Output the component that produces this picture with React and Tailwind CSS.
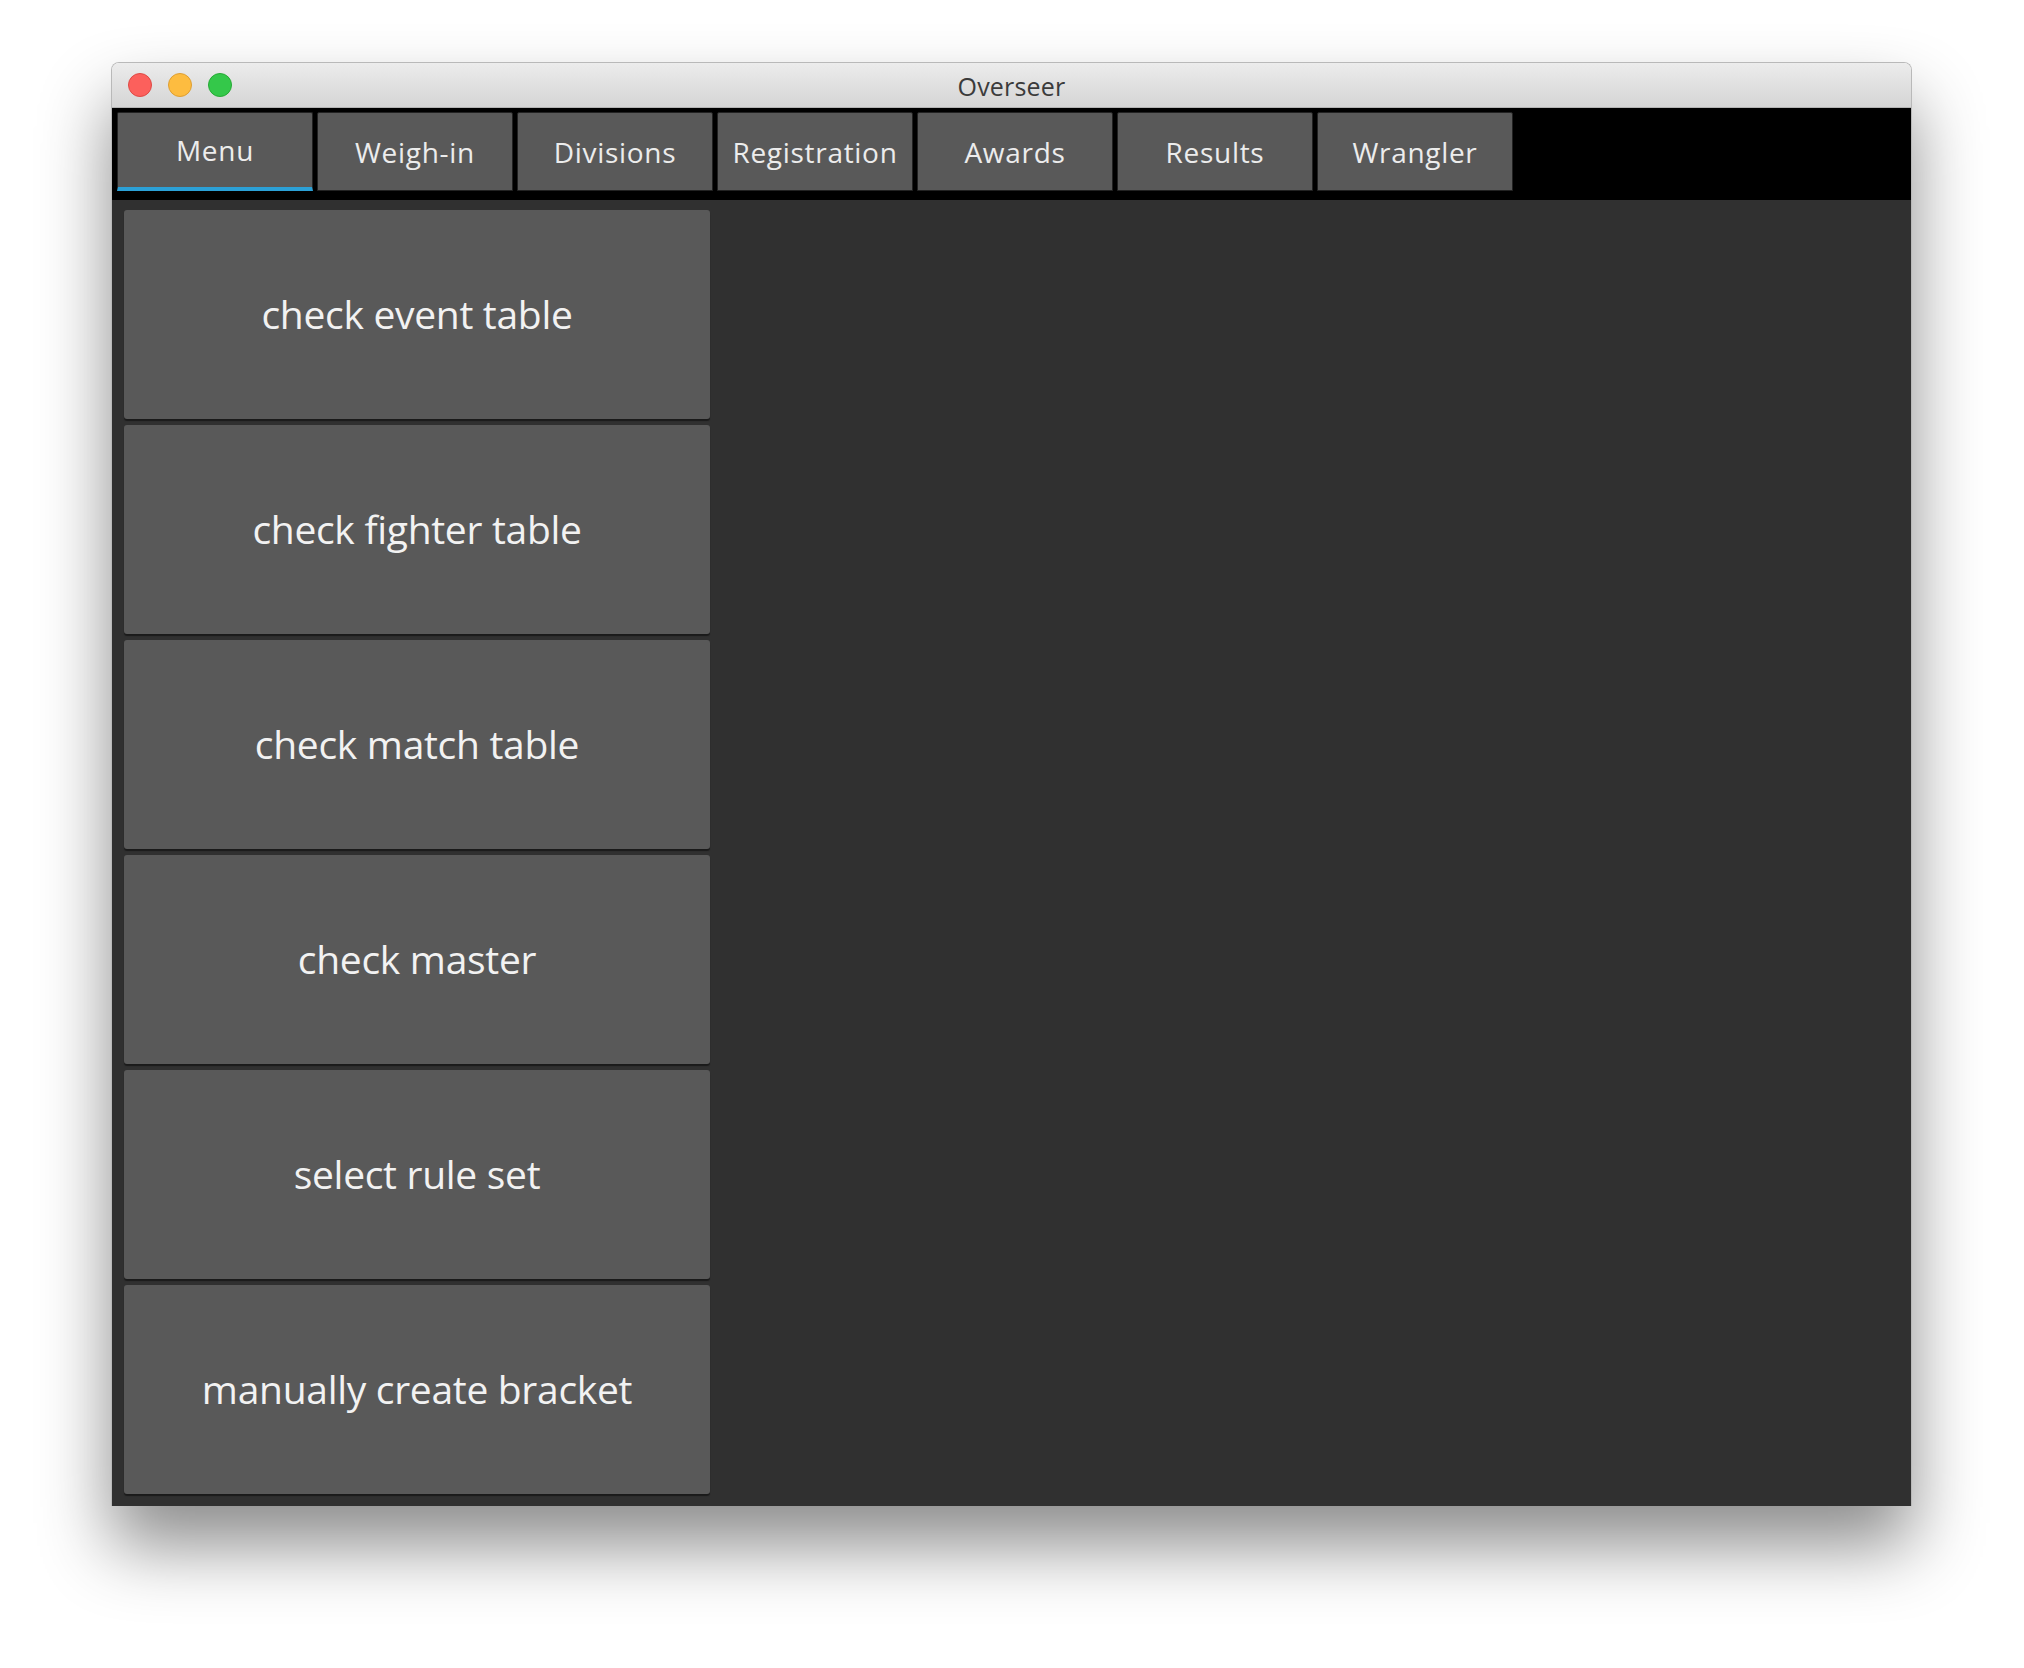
const tabs = ['Menu', 'Weigh-in', 'Divisions', 'Registration', 'Awards', 'Results', 'Wrangler'];

const actions = [
    'check event table',
    'check fighter table',
    'check match table',
    'check master',
    'select rule set',
    'manually create bracket',
];

function TrafficLights() {
    return (
        <div className="flex items-center gap-[16px] pl-[16px]">
            <span className="block w-[24px] h-[24px] rounded-full bg-[#fc605c] border border-[#de4a45]" />
            <span className="block w-[24px] h-[24px] rounded-full bg-[#fdbc40] border border-[#de9f33]" />
            <span className="block w-[24px] h-[24px] rounded-full bg-[#34c84a] border border-[#27aa35]" />
        </div>
    );
}

export default function App() {
    return (
        <div className="min-h-[1668px] w-[2024px] bg-white pl-[111px] pt-[62px]" style={{ fontFamily: '"Open Sans", "Noto Sans", sans-serif' }}>
            <div className="w-[1801px] h-[1444px] flex flex-col rounded-t-[8px] overflow-hidden shadow-[0_40px_70px_rgba(0,0,0,0.45)] border border-[#b9b9b9] border-b-0">
                {/* title bar */}
                <div className="relative h-[45px] shrink-0 flex items-center bg-gradient-to-b from-[#ececec] to-[#d5d5d5] border-b border-[#b4b4b4]">
                    <TrafficLights />
                    <div className="absolute inset-0 flex items-center justify-center pt-[3px] text-[25px] text-[#3b3b3b] tracking-[0.2px]">Overseer</div>
                </div>

                {/* tab strip */}
                <div className="h-[92px] shrink-0 bg-black flex items-start gap-[4px] pl-[5px] pt-[4px]">
                    {tabs.map((t, i) => (
                        <div key={t} className={`w-[196px] h-[79px] flex items-center justify-center bg-[#595959] border border-[#222] rounded-t-[2px] text-[28px] text-[#ececec] ${i === 0 ? 'border-b-[4px] border-b-[#2ba0d6]' : ''}`}>
                            <span className="tracking-[0.7px]">{t}</span>
                        </div>
                    ))}
                </div>

                {/* content */}
                <div className="flex-1 bg-[#303030] pl-[12px] pt-[10px] flex flex-col gap-[6px]">
                    {actions.map(a => (
                        <div key={a} className="w-[586px] h-[209px] flex items-center justify-center bg-[#595959] rounded-[3px] shadow-[0_2px_1px_rgba(0,0,0,0.45)] text-[39px] text-[#f2f2f2] tracking-[-0.3px]">
                            {a}
                        </div>
                    ))}
                </div>
            </div>
        </div>
    );
}
